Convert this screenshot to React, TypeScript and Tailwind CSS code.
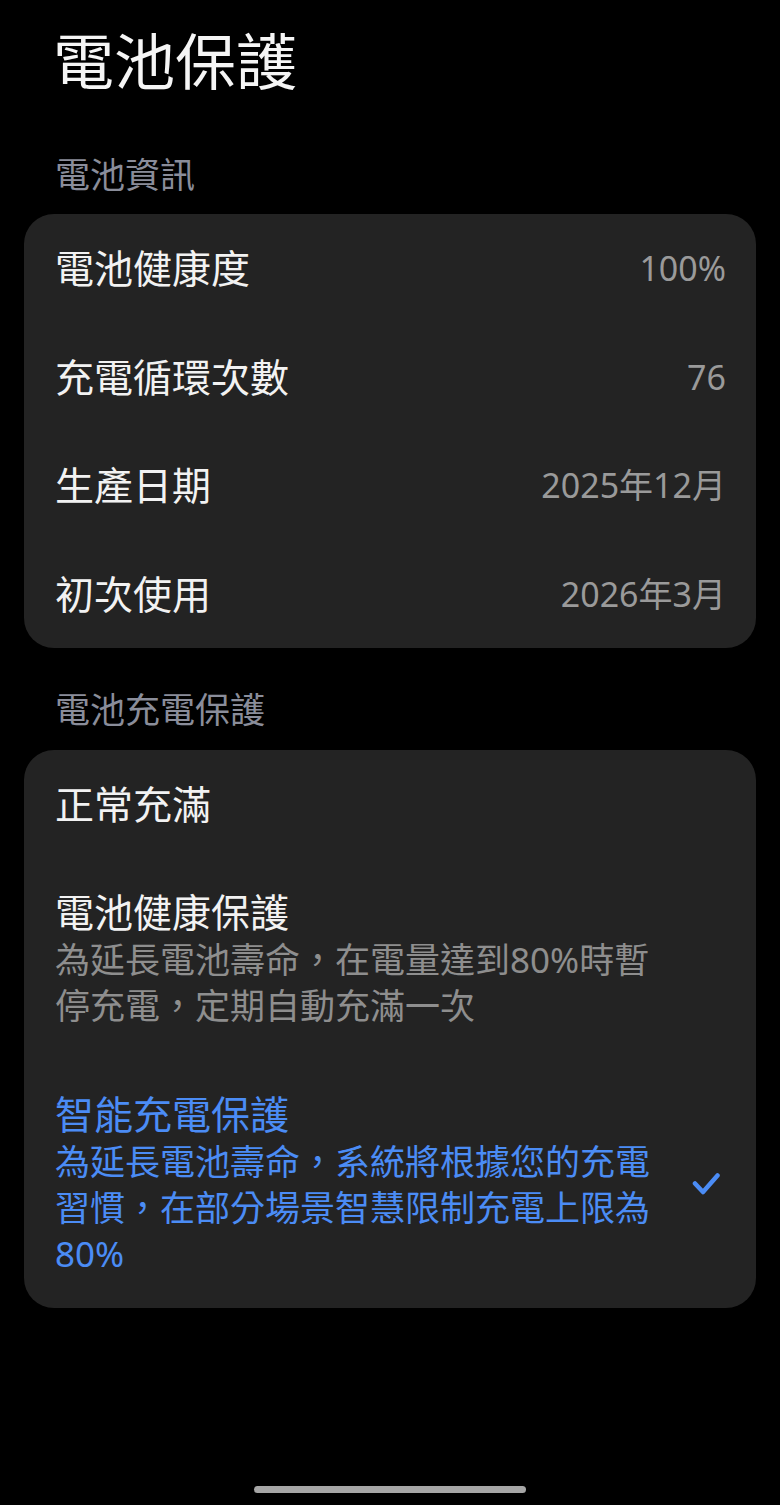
const font = { fontFamily: '"Noto Sans", "Noto Sans CJK TC", sans-serif' };

const infoRows = [
  { label: '電池健康度', value: '100%' },
  { label: '充電循環次數', value: '76' },
  { label: '生產日期', value: '2025年12月' },
  { label: '初次使用', value: '2026年3月' },
];

const modes = [
  { title: '正常充滿', desc: '', selected: false },
  { title: '電池健康保護', desc: '為延長電池壽命，在電量達到80%時暫停充電，定期自動充滿一次', selected: false },
  { title: '智能充電保護', desc: '為延長電池壽命，系統將根據您的充電習慣，在部分場景智慧限制充電上限為80%', selected: true },
];

const CheckIcon = () => (
  <svg width="28" height="24" viewBox="0 0 28 24" fill="none">
    <path d="M3 11.5 L11 20 L25.5 3.5" stroke="#4b8cf5" strokeWidth="4.5" strokeLinecap="round" strokeLinejoin="round" />
  </svg>
);

export default function App() {
  return (
    <div className="bg-black h-[1505px] flex flex-col overflow-hidden" style={font}>
      <h1 className="px-[53px] pt-[26px] text-[61px] leading-[72px] text-[#f5f5f5] font-normal">電池保護</h1>

      {/* Battery info */}
      <div className="px-[55px] mt-[53px] text-[35px] leading-[48px] text-[#8a8d9a]">電池資訊</div>
      <div className="mx-[24px] mt-[15px] bg-[#232323] rounded-[30px]">
        {infoRows.map((r) => (
          <div key={r.label} className="h-[108.5px] flex items-center justify-between pl-[31px] pr-[30px]">
            <span className="text-[39px] leading-[48px] text-[#f2f2f2]">{r.label}</span>
            <span className="text-[34px] leading-[48px] text-[#9a9a9a]">{r.value}</span>
          </div>
        ))}
      </div>

      {/* Charging protection */}
      <div className="px-[55px] mt-[38px] text-[35px] leading-[48px] text-[#8a8d9a]">電池充電保護</div>
      <div className="mx-[24px] mt-[16px] bg-[#232323] rounded-[30px]">
        {modes.map((m) => (
          <div key={m.title} className="flex items-center pl-[31px] pr-[36px] py-[31px]">
            <div className="flex-1 pr-[22px]">
              <div className={`text-[39px] leading-[46px] ${m.selected ? 'text-[#4b8cf5]' : 'text-[#f2f2f2]'}`}>{m.title}</div>
              {m.desc && (
                <div className={`mt-[2px] text-[35px] leading-[46px] ${m.selected ? 'text-[#4b8cf5]' : 'text-[#8e8e8e]'}`}>{m.desc}</div>
              )}
            </div>
            <div className="w-[28px] flex justify-center">{m.selected && <CheckIcon />}</div>
          </div>
        ))}
      </div>

      <div className="mt-auto mb-[12px] flex justify-center">
        <div className="w-[272px] h-[7px] rounded-full bg-[#a6a6a6]" />
      </div>
    </div>
  );
}
